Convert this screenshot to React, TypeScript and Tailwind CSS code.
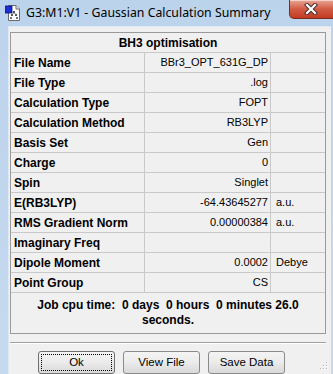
import React from "react";

const rows: { label: string; value: string; unit?: string }[] = [
  { label: "File Name", value: "BBr3_OPT_631G_DP" },
  { label: "File Type", value: ".log" },
  { label: "Calculation Type", value: "FOPT" },
  { label: "Calculation Method", value: "RB3LYP" },
  { label: "Basis Set", value: "Gen" },
  { label: "Charge", value: "0" },
  { label: "Spin", value: "Singlet" },
  { label: "E(RB3LYP)", value: "-64.43645277", unit: "a.u." },
  { label: "RMS Gradient Norm", value: "0.00000384", unit: "a.u." },
  { label: "Imaginary Freq", value: "" },
  { label: "Dipole Moment", value: "0.0002", unit: "Debye" },
  { label: "Point Group", value: "CS" },
];

function AppIcon() {
  return (
    <svg width="16" height="16" viewBox="0 0 16 16" className="block">
      <path d="M3.5 0.5 H11 L14.5 4 V15.5 H3.5 Z" fill="#ffffff" stroke="#6b6b6b" />
      <path d="M11 0.5 V4 H14.5" fill="#e8e8e8" stroke="#6b6b6b" />
      <rect x="0" y="1" width="7" height="7" fill="#1c2fd6" stroke="#0a1470" strokeWidth="0.8" />
      <rect x="8" y="6" width="2" height="2" fill="#555" />
      <rect x="6" y="9" width="2" height="2" fill="#555" />
      <rect x="10" y="9" width="2" height="2" fill="#555" />
      <rect x="5" y="12" width="2" height="2" fill="#777" />
      <rect x="11" y="12" width="2" height="2" fill="#777" />
      <path d="M9 8 L7 9.5 M9 8 L11 9.5" stroke="#777" strokeWidth="0.8" />
    </svg>
  );
}

function CloseButton() {
  return (
    <div className="absolute right-[-8px] top-0 h-[19px] w-[52px] rounded-bl-[5px] border border-t-0 border-[#7a2a1e] bg-gradient-to-b from-[#e8a595] via-[#d15a45] to-[#c43a22] flex items-center justify-center pr-[8px] shadow-[inset_0_1px_0_rgba(255,255,255,0.5)]">
      <svg width="14" height="12" viewBox="0 0 14 12">
        <path
          d="M3 2 L11 10 M11 2 L3 10"
          fill="none"
          stroke="#4a3030"
          strokeWidth="4.2"
          strokeLinecap="square"
        />
        <path
          d="M3 2 L11 10 M11 2 L3 10"
          fill="none"
          stroke="#ffffff"
          strokeWidth="2.2"
          strokeLinecap="square"
        />
      </svg>
    </div>
  );
}

function Btn({ label, isDefault }: { label: string; isDefault?: boolean }) {
  return (
    <div
      className={
        "h-[23px] w-[77px] rounded-[3px] border flex items-center justify-center bg-gradient-to-b from-[#f4f4f4] via-[#ebebeb] to-[#d9d9d9] " +
        (isDefault ? "border-[#707070]" : "border-[#8a8a8a]")
      }
    >
      <div
        className={
          "h-[17px] w-[71px] flex items-center justify-center text-[11.5px] text-black " +
          (isDefault ? "border border-dotted border-black" : "")
        }
        style={{ fontFamily: '"Liberation Sans", Arial, sans-serif' }}
      >
        {label}
      </div>
    </div>
  );
}

export default function App() {
  const sans = '"Liberation Sans", Arial, sans-serif';
  return (
    <div className="relative w-[333px] h-[374px] overflow-hidden bg-gradient-to-b from-[#bcd3ec] to-[#c6daef]">
      {/* title bar */}
      <div className="h-[26px] flex items-center pl-[5px] gap-[5px]">
        <AppIcon />
        <span
          className="text-[12.3px] text-black leading-none whitespace-nowrap"
          style={{ fontFamily: '"Noto Sans", "Open Sans", sans-serif' }}
        >
          G3:M1:V1 - Gaussian Calculation Summary
        </span>
      </div>
      <CloseButton />

      {/* client area */}
      <div className="ml-[8px] mr-[2px] h-[348px] bg-[#f0f0f0] border-t border-l border-[#dfe8f2] pt-[5px] pl-[1px]">
        <div
          className="w-[316px] border border-[#9a9a9a] bg-[#f0f0f0] text-black"
          style={{ fontFamily: sans }}
        >
          <div className="h-[20px] border-b border-[#c9c9c9] flex items-center justify-center font-bold text-[12px]">
            BH3 optimisation
          </div>
          {rows.map((r) => (
            <div key={r.label} className="h-[20px] border-b border-[#c9c9c9] flex">
              <div className="w-[134px] border-r border-[#c9c9c9] pl-[3px] flex items-center font-bold text-[12px] whitespace-nowrap">
                {r.label}
              </div>
              <div className="w-[126px] border-r border-[#c9c9c9] pr-[2px] flex items-center justify-end text-[11px] whitespace-nowrap">
                {r.value}
              </div>
              <div className="flex-1 pl-[5px] flex items-center text-[11px] whitespace-nowrap">
                {r.unit ?? ""}
              </div>
            </div>
          ))}
          <div className="h-[40px] flex flex-col items-center justify-center font-bold text-[12px] leading-[15px] whitespace-pre">
            <span>{"Job cpu time:  0 days  0 hours  0 minutes 26.0"}</span>
            <span>seconds.</span>
          </div>
        </div>

        {/* separator */}
        <div className="mt-[8px] w-[316px] h-[2px] border-t border-[#a0a0a0] border-b border-b-white" />

        {/* buttons */}
        <div className="mt-[7px] pl-[28px] flex gap-[8px]">
          <Btn label="Ok" isDefault />
          <Btn label="View File" />
          <Btn label="Save Data" />
        </div>
      </div>

      {/* resize grip */}
      <svg className="absolute right-[5px] bottom-[4px]" width="10" height="10" viewBox="0 0 10 10">
        {[
          [8, 2],
          [5, 5],
          [8, 5],
          [2, 8],
          [5, 8],
          [8, 8],
        ].map(([x, y], i) => (
          <g key={i}>
            <rect x={x} y={y} width="1" height="1" fill="#b8b8b8" />
            <rect x={x + 1} y={y + 1} width="1" height="1" fill="#ffffff" />
          </g>
        ))}
      </svg>
    </div>
  );
}
